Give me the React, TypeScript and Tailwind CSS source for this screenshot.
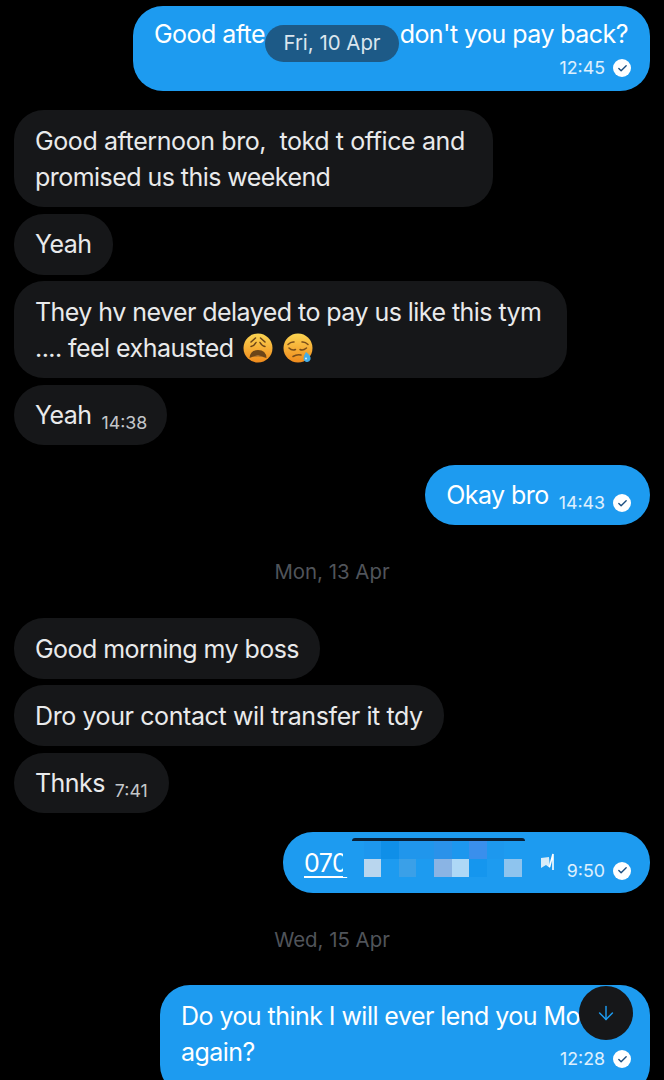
import { ArrowDown, Check } from 'lucide-react';
import type { ReactNode } from 'react';

const Tick = () => (
  <span className="flex h-[18px] w-[18px] items-center justify-center rounded-full bg-white">
    <Check className="h-[11px] w-[11px] text-[#1d4f80]" strokeWidth={3} />
  </span>
);

const Meta = ({ time, tick }: { time: string; tick?: boolean }) => (
  <span className="flex items-center gap-[8px] text-[17.8px] leading-none tracking-normal text-white/85">
    {time}
    {tick && <Tick />}
  </span>
);

const Incoming = ({ children, className }: { children: ReactNode; className?: string }) => (
  <div className={`w-fit rounded-[30px] bg-[#161719] pl-[21px] text-[25px] leading-[36px] tracking-[-0.55px] text-[#e9eaeb] ${className}`}>
    {children}
  </div>
);

const Outgoing = ({ children, className }: { children: ReactNode; className?: string }) => (
  <div className={`relative ml-auto rounded-[30px] bg-[#1d9bf0] pl-[21px] text-[25px] leading-[36px] tracking-[-0.55px] text-white ${className}`}>
    {children}
  </div>
);

const DayLabel = ({ children, className }: { children: ReactNode; className?: string }) => (
  <div className={`text-center text-[20.4px] leading-[24px] text-[#50545a] ${className}`}>{children}</div>
);

// blurred-out phone number cells, two rows of ten
const mosaic = [
  ['bg-[#1d9bf0]', 'bg-[#1d97ee]', 'bg-[#0f8fe8]', 'bg-[#2096ec]', 'bg-[#2096ec]', 'bg-[#2a92ea]', 'bg-[#1d97ee]', 'bg-[#3a8fec]', 'bg-[#1d98ee]', 'bg-[#1d9bf0]'],
  ['bg-[#1d9bf0]', 'bg-[#b9d6ee]', 'bg-[#1d9bf0]', 'bg-[#3aa0e8]', 'bg-[#1d9bf0]', 'bg-[#8ab4e4]', 'bg-[#aed8f6]', 'bg-[#1596ee]', 'bg-[#1d9bf0]', 'bg-[#8ec4ee]'],
];

const Emoji = ({ kind }: { kind: 'weary' | 'sleepy' }) => (
  <svg viewBox="0 0 30 30" className="h-[30px] w-[30px]">
    <defs>
      <linearGradient id={kind} x1="0" y1="0" x2="0" y2="1">
        <stop offset="0" stopColor="#fcd552" />
        <stop offset="1" stopColor="#ef8a1c" />
      </linearGradient>
    </defs>
    <circle cx="15" cy="15" r="14.5" fill={`url(#${kind})`} />
    {kind === 'weary' ? (
      <>
        <path d="M8 9l4.5-4M22 9l-4.5-4M8 13.5q3-.5 5-4M22 13.5q-3-.5-5-4" stroke="#6b4418" strokeWidth="1.5" fill="none" strokeLinecap="round" />
        <path d="M6.5 25q.5-8 8.500-8t8.500 8q-8.500-3.500-17 0z" fill="#6b4418" />
        <path d="M9 24q6-3 12 0q-6-2-12 0z" fill="#d99a5c" />
      </>
    ) : (
      <>
        <path d="M5 11.500q3-3 6-2.500M25 11.500q-3-3-6-2.500M6 15q3 3 6.500 1.500M17 16.500q3 1.500 6.500-1.500M10 23.500q4-2.500 8-1.500" stroke="#7a4e1a" strokeWidth="1.5" fill="none" strokeLinecap="round" />
        <path d="M23 19q5.500 4 4.500 7.500a3.600 3.600 0 0 1-7-1q0-3 2.500-6.500z" fill="#45aee8" />
        <circle cx="23" cy="25.500" r="1" fill="#d8f0fc" />
      </>
    )}
  </svg>
);

const App = () => {
  return (
    <div className="relative h-[1080px] w-[664px] overflow-hidden bg-black pl-[14px] pr-[14px] pt-[6px] font-['Inter',sans-serif]">
      <Outgoing className="h-[85px] w-[517px] pt-[10px]">
        <div className="flex justify-between pr-[22px]">
          <span>Good afte</span>
          <span>don't you pay back?</span>
        </div>
        <div className="mt-[7px] flex justify-end pr-[19px]">
          <Meta time="12:45" tick />
        </div>
      </Outgoing>

      <Incoming className="mt-[19px] h-[97px] min-w-[479px] pt-[13px]">
        <span className="tracking-[-0.4px]">Good afternoon bro,&nbsp; tokd t office and</span>
        <br />
        promised us this weekend
      </Incoming>
      <Incoming className="mt-[7px] h-[61px] pr-[21px] pt-[12px]">Yeah</Incoming>
      <Incoming className="mt-[6px] h-[97px] min-w-[553px] pt-[13px]">
        They hv never delayed to pay us like this tym
        <br />
        <span className="flex items-center gap-[10px]">
          .... feel exhausted <Emoji kind="weary" /> <Emoji kind="sleepy" />
        </span>
      </Incoming>
      <Incoming className="mt-[7px] flex h-[60px] items-center gap-[10px] pr-[20px]">
        Yeah
        <span className="mt-[16px] text-[17.8px] leading-none tracking-normal text-[#c4c6c9]">14:38</span>
      </Incoming>

      <Outgoing className="mt-[20px] flex h-[60px] w-fit items-center gap-[10px] pr-[19px]">
        Okay bro
        <span className="mt-[16px]">
          <Meta time="14:43" tick />
        </span>
      </Outgoing>

      <DayLabel className="mt-[35px]">Mon, 13 Apr</DayLabel>

      <Incoming className="mt-[34px] h-[61px] pr-[21px] pt-[13px]">Good morning my boss</Incoming>
      <Incoming className="mt-[6px] h-[61px] pr-[21px] pt-[13px]">
        <span className="tracking-[-0.4px]">Dro your contact wil transfer it tdy</span>
      </Incoming>
      <Incoming className="mt-[7px] flex h-[60px] items-center gap-[10px] pr-[21px]">
        Thnks
        <span className="mt-[16px] text-[17.8px] leading-none tracking-normal text-[#c4c6c9]">7:41</span>
      </Incoming>

      <Outgoing className="mt-[19px] flex h-[61px] w-[367px] items-center justify-between pr-[19px]">
        <span className="underline underline-offset-[4px]">070</span>
        <span className="mt-[16px]">
          <Meta time="9:50" tick />
        </span>
        <div className="absolute left-[60px] top-[6px] w-[182px] bg-[#1d9bf0] pl-[3px]">
          <div className="ml-[6px] h-[3px] rounded-t-[3px] bg-[#0a1f35]" />
          {mosaic.map((row, i) => (
            <div key={i} className="flex">
              {row.map((cell, j) => (
                <div key={j} className={`h-[18px] w-[17.6px] ${cell}`} />
              ))}
            </div>
          ))}
        </div>
        <svg viewBox="0 0 14 20" className="absolute left-[258px] top-[20px] h-[20px] w-[14px]">
          <path d="M0 6l8-1 1 11-4-3-5 3z" fill="#d9ecf8" />
          <path d="M8.500 15L12 2v16" stroke="#fff" strokeWidth="1.6" fill="none" />
        </svg>
      </Outgoing>

      <DayLabel className="mt-[35px]">Wed, 15 Apr</DayLabel>

      <Outgoing className="mt-[33px] h-[110px] w-[490px] pt-[13px]">
        <div>Do you think I will ever lend you Money</div>
        <div className="flex items-start justify-between pr-[19px]">
          <span>again?</span>
          <span className="mt-[16px]">
            <Meta time="12:28" tick />
          </span>
        </div>
      </Outgoing>

      {/* floating layers over the conversation */}
      <div className="absolute left-[265px] top-[25px] flex h-[37px] w-[134px] items-center justify-center rounded-full bg-[#1d5a87] text-[20.4px] text-[#dbe6ee]">
        Fri, 10 Apr
      </div>
      <button className="absolute left-[579px] top-[986px] flex h-[54px] w-[54px] items-center justify-center rounded-full bg-[#161719]">
        <ArrowDown className="h-[22px] w-[22px] text-[#1d9bf0]" strokeWidth={1.6} />
      </button>
    </div>
  );
};

export default App;
